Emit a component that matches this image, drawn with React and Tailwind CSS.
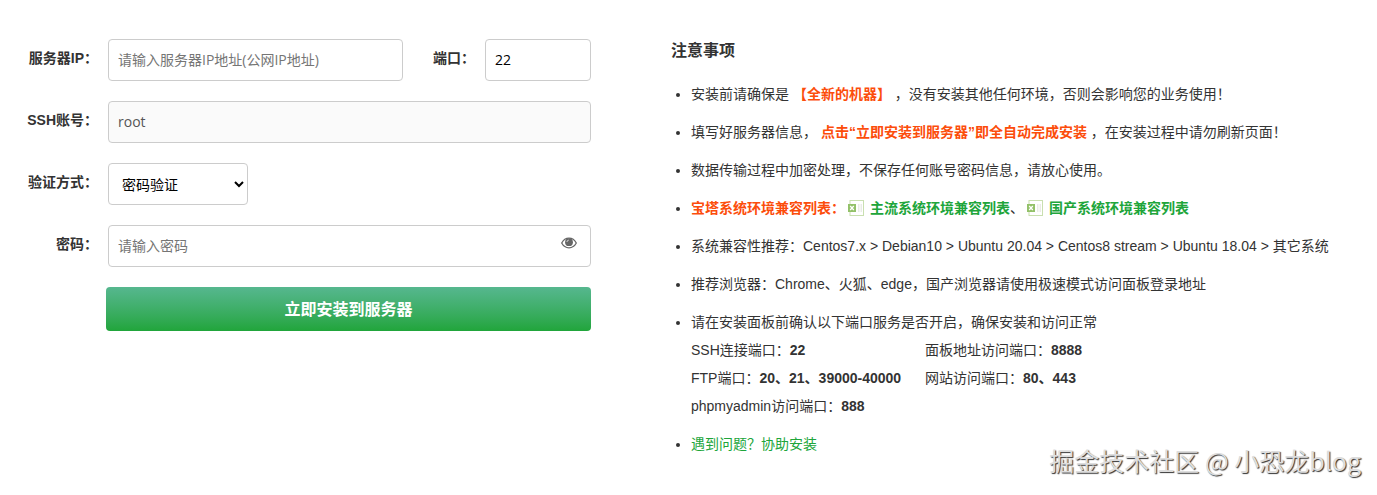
import React, { useState } from "react";

const labelClass =
  "h-[38px] w-[98px] shrink-0 text-right text-sm/[38px] font-bold whitespace-nowrap";

const inputClass =
  "h-[42px] rounded border border-[#ccc] px-[9px] pb-[2px] text-sm outline-none font-['Open_Sans','Noto_Sans_CJK_SC',sans-serif] placeholder:text-[#757575]";

const ports = [
  { name: "SSH连接端口：", value: "22" },
  { name: "面板地址访问端口：", value: "8888" },
  { name: "FTP端口：", value: "20、21、39000-40000" },
  { name: "网站访问端口：", value: "80、443" },
  { name: "phpmyadmin访问端口：", value: "888" },
];

const EyeIcon = () => (
  <svg viewBox="0 0 16 12" className="w-4 h-3" aria-hidden="true">
    <path
      d="M.7 6C2.3 3 4.9 1.2 8 1.2S13.700 3 15.300 6C13.700 9 11.100 10.800 8 10.800S2.300 9 .7 6Z"
      fill="none"
      stroke="#666"
      strokeWidth="1.300"
    />
    <circle cx="8" cy="5.200" r="3.900" fill="#666" />
    <path d="M5.900 5A2.100 2.100 0 0 1 7.800 3.100" fill="none" stroke="#ddd" strokeWidth=".9" />
  </svg>
);

const ExcelIcon = () => (
  <svg viewBox="0 0 16 16" className="inline-block w-4 h-4 align-[-3px] mr-[6px]" aria-hidden="true">
    <rect x="2" y=".5" width="13.500" height="15" fill="#fff" stroke="#c9dfb0" />
    <path d="M10 5h1.500M12.500 5H14M10 7h1.500M12.500 7H14M10 9h1.500M12.500 9H14M10 11h1.500M12.500 11H14" stroke="#d5d9cf" />
    <rect x="0" y="4" width="8" height="8" fill="#93c169" />
    <path d="M2.200 6l3.600 4M5.800 6l-3.600 4" stroke="#fff" strokeWidth="1.300" />
  </svg>
);

const InstallForm = () => {
  const [showPassword, setShowPassword] = useState(false);

  return (
    <form className="w-[591px] shrink-0 flex flex-col gap-5" onSubmit={(e) => e.preventDefault()}>
      <div className="flex gap-[10px]">
        <label htmlFor="ip" className={labelClass}>服务器IP：</label>
        <input
          id="ip"
          type="text"
          placeholder="请输入服务器IP地址(公网IP地址)"
          className={`${inputClass} min-w-0 flex-1`}
        />
        <label htmlFor="port" className="ml-5 text-sm/[38px] font-bold whitespace-nowrap">端口：</label>
        <input id="port" type="text" defaultValue="22" className={`${inputClass} w-[106px] text-black`} />
      </div>

      <div className="flex gap-[10px]">
        <label htmlFor="account" className={labelClass}>SSH账号：</label>
        <input
          id="account"
          type="text"
          readOnly
          value="root"
          className={`${inputClass} min-w-0 flex-1 bg-[#fafafa] text-[#555]`}
        />
      </div>

      <div className="flex gap-[10px]">
        <label htmlFor="method" className={labelClass}>验证方式：</label>
        <select
          id="method"
          className="h-[42px] w-[140px] rounded border border-[#ccc] bg-white pl-[9px] pt-[2px] text-sm text-black outline-none"
        >
          <option>密码验证</option>
          <option>密钥验证</option>
        </select>
      </div>

      <div className="flex gap-[10px]">
        <label htmlFor="password" className={labelClass}>密码：</label>
        <div className="relative flex-1">
          <input
            id="password"
            type={showPassword ? "text" : "password"}
            placeholder="请输入密码"
            className={`${inputClass} w-full`}
          />
          <button
            type="button"
            aria-label="显示密码"
            className="absolute right-[14px] top-3 cursor-pointer"
            onClick={() => setShowPassword(!showPassword)}
          >
            <EyeIcon />
          </button>
        </div>
      </div>

      <button
        type="submit"
        className="ml-[106px] h-11 rounded bg-linear-to-b from-[#56b78f] to-[#20a53a] pt-[2px] text-base font-bold text-white cursor-pointer"
      >
        立即安装到服务器
      </button>
    </form>
  );
};

const Notice = () => (
  <section className="min-w-0 flex-1">
    <h2 className="text-base/6 font-bold">注意事项</h2>
    <ul className="mt-[17px] flex list-disc flex-col gap-[10px] pl-5 text-sm/7">
      <li>
        安装前请确保是 <b className="text-[#fc4d0b]">【全新的机器】</b> ，没有安装其他任何环境，否则会影响您的业务使用！
      </li>
      <li>
        填写好服务器信息， <b className="text-[#fc4d0b]">点击“立即安装到服务器”即全自动完成安装</b> ，在安装过程中请勿刷新页面！
      </li>
      <li>数据传输过程中加密处理，不保存任何账号密码信息，请放心使用。</li>
      <li>
        <b className="text-[#fc4d0b]">宝塔系统环境兼容列表：</b>
        <a href="#" className="ml-[3px] font-bold text-[#20a53a]"><ExcelIcon />主流系统环境兼容列表</a>、
        <a href="#" className="ml-[3px] font-bold text-[#20a53a]"><ExcelIcon />国产系统环境兼容列表</a>
      </li>
      <li>系统兼容性推荐：Centos7.x &gt; Debian10 &gt; Ubuntu 20.04 &gt; Centos8 stream &gt; Ubuntu 18.04 &gt; 其它系统</li>
      <li>推荐浏览器：Chrome、火狐、edge，国产浏览器请使用极速模式访问面板登录地址</li>
      <li>
        请在安装面板前确认以下端口服务是否开启，确保安装和访问正常
        <div className="grid grid-cols-[234px_1fr]">
          {ports.map((item) => (
            <div key={item.name}>
              {item.name}<b>{item.value}</b>
            </div>
          ))}
        </div>
      </li>
      <li>
        <a href="#" className="text-[#20a53a]">遇到问题？协助安装</a>
      </li>
    </ul>
  </section>
);

export default function App() {
  return (
    <main
      lang="zh-CN"
      className="relative flex items-start gap-20 bg-white pb-9 text-[#333] font-['Liberation_Sans','Noto_Sans_CJK_SC',sans-serif]"
    >
      <div className="pt-[39px]">
        <InstallForm />
      </div>
      <div className="min-w-0 flex-1 pt-[39px]">
        <Notice />
      </div>
      <div className="absolute right-4 bottom-4 text-[25px]/9 text-[#ddd] [text-shadow:1px_1px_1px_#333] font-['Noto_Sans_CJK_SC',sans-serif]">
        掘金技术社区 @ 小恐龙blog
      </div>
    </main>
  );
}
